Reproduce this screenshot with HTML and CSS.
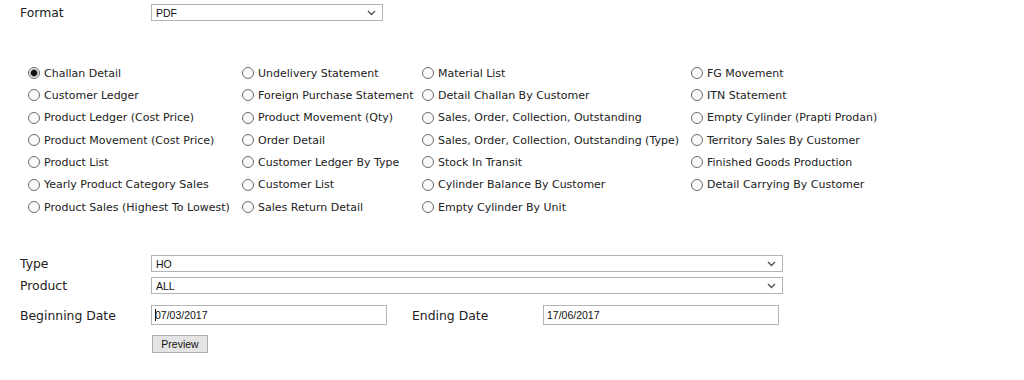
FILE: index.html
```html
<!DOCTYPE html>
<html lang="en">
<head>
    <meta charset="UTF-8">
    <title>Report</title>
    <link rel="stylesheet" href="styles.css">
</head>
<body>
    <div class="page">
        <div class="field format-row">
            <span class="lbl">Format</span>
            <div class="sel sel-format">
                <span class="sel-text">PDF</span>
                <svg class="caret" width="9" height="6" viewBox="0 0 9 6"><path d="M1 1 L4.5 4.5 L8 1" fill="none" stroke="#555" stroke-width="1.4"/></svg>
            </div>
        </div>

        <div class="reports">
            <label class="opt"><span class="radio checked"></span>Challan Detail</label>
            <label class="opt"><span class="radio"></span>Undelivery Statement</label>
            <label class="opt"><span class="radio"></span>Material List</label>
            <label class="opt"><span class="radio"></span>FG Movement</label>

            <label class="opt"><span class="radio"></span>Customer Ledger</label>
            <label class="opt"><span class="radio"></span>Foreign Purchase Statement</label>
            <label class="opt"><span class="radio"></span>Detail Challan By Customer</label>
            <label class="opt"><span class="radio"></span>ITN Statement</label>

            <label class="opt"><span class="radio"></span>Product Ledger (Cost Price)</label>
            <label class="opt"><span class="radio"></span>Product Movement (Qty)</label>
            <label class="opt"><span class="radio"></span>Sales, Order, Collection, Outstanding</label>
            <label class="opt"><span class="radio"></span>Empty Cylinder (Prapti Prodan)</label>

            <label class="opt"><span class="radio"></span>Product Movement (Cost Price)</label>
            <label class="opt"><span class="radio"></span>Order Detail</label>
            <label class="opt"><span class="radio"></span>Sales, Order, Collection, Outstanding (Type)</label>
            <label class="opt"><span class="radio"></span>Territory Sales By Customer</label>

            <label class="opt"><span class="radio"></span>Product List</label>
            <label class="opt"><span class="radio"></span>Customer Ledger By Type</label>
            <label class="opt"><span class="radio"></span>Stock In Transit</label>
            <label class="opt"><span class="radio"></span>Finished Goods Production</label>

            <label class="opt"><span class="radio"></span>Yearly Product Category Sales</label>
            <label class="opt"><span class="radio"></span>Customer List</label>
            <label class="opt"><span class="radio"></span>Cylinder Balance By Customer</label>
            <label class="opt"><span class="radio"></span>Detail Carrying By Customer</label>

            <label class="opt"><span class="radio"></span>Product Sales (Highest To Lowest)</label>
            <label class="opt"><span class="radio"></span>Sales Return Detail</label>
            <label class="opt"><span class="radio"></span>Empty Cylinder By Unit</label>
        </div>

        <div class="filters">
            <div class="field type-row">
                <span class="lbl">Type</span>
                <div class="sel sel-wide">
                    <span class="sel-text">HO</span>
                    <svg class="caret" width="9" height="6" viewBox="0 0 9 6"><path d="M1 1 L4.5 4.5 L8 1" fill="none" stroke="#555" stroke-width="1.4"/></svg>
                </div>
            </div>
            <div class="field product-row">
                <span class="lbl">Product</span>
                <div class="sel sel-wide">
                    <span class="sel-text">ALL</span>
                    <svg class="caret" width="9" height="6" viewBox="0 0 9 6"><path d="M1 1 L4.5 4.5 L8 1" fill="none" stroke="#555" stroke-width="1.4"/></svg>
                </div>
            </div>
            <div class="field date-row">
                <span class="lbl">Beginning Date</span>
                <div class="txt"><span class="cursor"></span>07/03/2017</div>
                <span class="lbl lbl-end">Ending Date</span>
                <div class="txt">17/06/2017</div>
            </div>
            <div class="field btn-row">
                <span class="lbl"></span>
                <button class="btn">Preview</button>
            </div>
        </div>
    </div>
</body>
</html>
```

FILE: styles.css
```css
body {
    margin: 0;
    background: #fff;
    color: #222;
    font-family: "DejaVu Sans", Verdana, sans-serif;
}
.page {
    padding: 4px 0 0 20px;
}
.field {
    display: flex;
    align-items: center;
}
.lbl {
    width: 131px;
    flex: none;
    font-size: 12.4px;
    color: #222;
}
.sel {
    position: relative;
    box-sizing: border-box;
    height: 17px;
    border: 1px solid #b4b4b4;
    background: #fff;
    font: 10.5px "Liberation Sans", Arial, sans-serif;
    color: #111;
    display: flex;
    align-items: center;
    padding-left: 4px;
}
.sel-format {
    width: 232px;
}
.sel-wide {
    width: 632px;
}
.caret {
    position: absolute;
    right: 6px;
    top: 5px;
}
.reports {
    display: grid;
    grid-template-columns: 214px 180px 269px auto;
    grid-auto-rows: 22.33px;
    margin: 41px 0 0 8px;
    font-size: 11px;
    color: #222;
}
.opt {
    display: flex;
    align-items: center;
    white-space: nowrap;
}
.radio {
    box-sizing: border-box;
    width: 12px;
    height: 12px;
    margin-right: 4px;
    border: 1px solid #6b6b6b;
    border-radius: 50%;
    background: #fafafa;
    flex: none;
}
.radio.checked {
    background: radial-gradient(circle, #111 0, #111 2.6px, #888 3.4px, #f2f2f2 4.2px);
}
.filters {
    margin-top: 37px;
}
.type-row {
    margin-bottom: 5px;
}
.product-row {
    margin-bottom: 11px;
}
.txt {
    box-sizing: border-box;
    width: 236px;
    height: 20px;
    border: 1px solid #b4b4b4;
    font: 10.5px "Liberation Sans", Arial, sans-serif;
    color: #111;
    display: flex;
    align-items: center;
    padding-left: 3px;
}
.lbl-end {
    margin-left: 25px;
}
.cursor {
    width: 1px;
    height: 12px;
    background: #111;
    margin-right: -1px;
}
.btn-row {
    margin-top: 10px;
}
.btn {
    box-sizing: border-box;
    width: 56px;
    height: 18px;
    margin-left: 1px;
    border: 1px solid #adadad;
    background: #e4e4e4;
    font: 10.5px "Liberation Sans", Arial, sans-serif;
    color: #111;
    padding: 0;
}
```
